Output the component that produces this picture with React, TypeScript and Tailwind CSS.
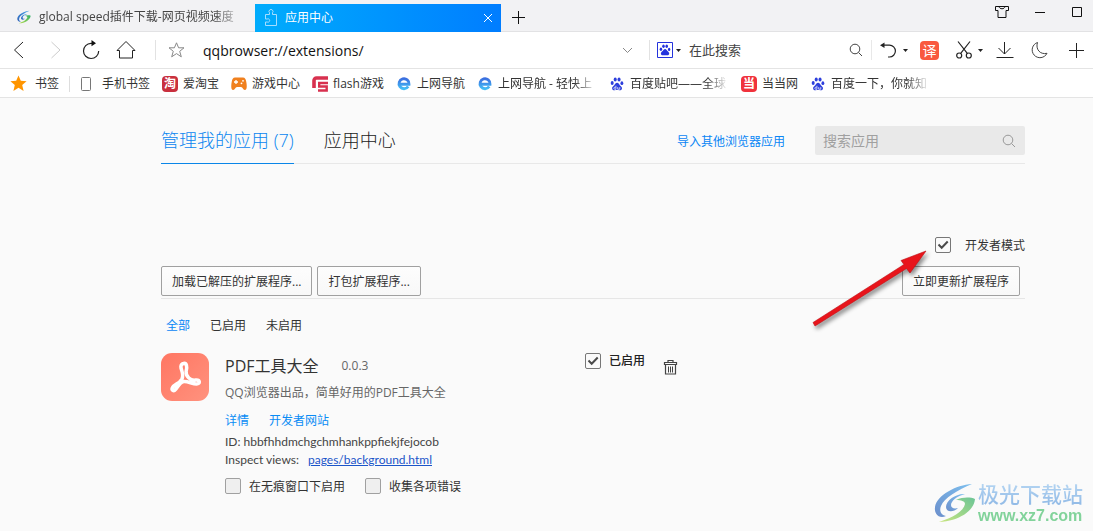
import React from "react";

type BookmarkItem = {
  label: string;
  icon: React.ReactNode;
  fade?: boolean;
};

//logo of the download site
const SwirlLogo = ({ className, id }: { className: string; id: string }) => (
  <svg className={className} viewBox="0 0 42 40" aria-hidden="true">
    <defs>
      <linearGradient id={`${id}-blue`} x1="0" y1="1" x2="1" y2="0">
        <stop offset="0" stopColor="#2f62b8" />
        <stop offset="1" stopColor="#49a7ea" />
      </linearGradient>
      <linearGradient id={`${id}-green`} x1="0" y1="1" x2="1" y2="0">
        <stop offset="0" stopColor="#b4dc4a" />
        <stop offset="1" stopColor="#2fae6c" />
      </linearGradient>
    </defs>
    <path
      fill={`url(#${id}-blue)`}
      d="M38 1C22 2 3 12 1 24c-1 7 4 12 11 9-5-1-7-5-5-10C10 15 24 7 38 1z"
    />
    <path
      fill={`url(#${id}-blue)`}
      d="M31 11c-8-1-19 6-19 13 0 5 7 6 12 1-4 1-7 0-7-3 0-4 6-9 14-11z"
    />
    <path
      fill={`url(#${id}-green)`}
      d="M22 17c7-3 14-3 19-1-1 12-16 22-36 23 13-4 25-11 26-18 0-3-4-4-9-4z"
    />
  </svg>
);

const PawShape = () => (
  <>
    <ellipse cx="2.6" cy="7.4" rx="1.7" ry="2.2" />
    <ellipse cx="6" cy="3.4" rx="1.7" ry="2.3" />
    <ellipse cx="10.3" cy="3.4" rx="1.7" ry="2.3" />
    <ellipse cx="13.5" cy="7.6" rx="1.6" ry="2.1" />
    <path d="M8.1 7.2c-1.6 0-2.1 1.5-3.2 2.6C3.6 11 2.5 11.6 2.5 13.2c0 1.7 1.3 2.5 2.900 2.300 1.800-.300 3.400-.300 5.200 0 1.700.200 3-.600 3-2.300 0-1.600-1.200-2.200-2.400-3.400-1-1.100-1.500-2.600-3.100-2.600z" />
  </>
);

const BaiduIcon = () => (
  <svg className="h-4 w-4" viewBox="-1 0 18 17" fill="#2d3fdc" aria-hidden="true">
    <PawShape />
    <path d="M6.800 10.500v4H5.600c-1.500 0-1.500-2.400 0-2.400h1M8.800 12v2.400h2.300V12" fill="none" stroke="#fff" strokeWidth=".8" />
  </svg>
);

const BrowserIcon = () => (
  <svg className="h-4 w-4" viewBox="0 0 16 16" fill="none" aria-hidden="true">
    <defs>
      <linearGradient id="nav-e" x1="0" y1="0" x2="0" y2="1">
        <stop offset="0" stopColor="#3b6fe0" />
        <stop offset="1" stopColor="#43bdf5" />
      </linearGradient>
    </defs>
    <path
      d="M12.200 10.500A5 5 0 1 1 13 8.200H4"
      stroke="url(#nav-e)"
      strokeWidth="2.900"
    />
  </svg>
);

const GamepadIcon = () => (
  <svg className="h-4 w-4" viewBox="0 0 16 16" aria-hidden="true">
    <path
      d="M4 1.500h8c2 0 2.800 1.600 3.300 4.500.600 3.300 1 8-1.500 8-1.800 0-2-3-3.800-3H6c-1.800 0-2 3-3.800 3C-.300 14 .100 9.300.700 6 1.200 3.100 2 1.500 4 1.500z"
      fill="#f0801e"
    />
    <path d="M3 6h4M5 4v4" stroke="#fff" strokeWidth="1.300" />
    <circle cx="12" cy="4.800" r=".9" fill="#fff" />
    <circle cx="10.500" cy="7.300" r=".9" fill="#fff" />
  </svg>
);

const FlashIcon = () => (
  <svg className="h-4 w-4" viewBox="0 0 16 16" fill="none" stroke="#d8314f" aria-hidden="true">
    <path d="M16 2H4.500A2.500 2.500 0 0 0 2 4.500V12" strokeWidth="3.600" />
    <path d="M16 7H7.200V10.500H14.700V14.500H6" strokeWidth="2.400" />
  </svg>
);

const bookmarks: BookmarkItem[] = [
  {
    label: "爱淘宝",
    icon: (
      <span className="grid h-4 w-4 place-items-center rounded-sm bg-[#c9303e] text-[12px] leading-4 font-bold text-white">
        淘
      </span>
    ),
  },
  { label: "游戏中心", icon: <GamepadIcon /> },
  { label: "flash游戏", icon: <FlashIcon /> },
  { label: "上网导航", icon: <BrowserIcon /> },
  { label: "上网导航 - 轻快上", icon: <BrowserIcon />, fade: true },
  { label: "百度贴吧——全球", icon: <BaiduIcon />, fade: true },
  {
    label: "当当网",
    icon: (
      <span className="grid h-4 w-4 place-items-center rounded-sm bg-[#f0323c] text-[12px] leading-4 font-bold text-white">
        当
      </span>
    ),
  },
  { label: "百度一下，你就知", icon: <BaiduIcon />, fade: true },
];

const Caret = () => (
  <svg className="h-[3px] w-[5px]" viewBox="0 0 5 3" aria-hidden="true">
    <path d="M0 0h5L2.500 3z" fill="#222" />
  </svg>
);

const SearchIcon = ({ className }: { className: string }) => (
  <svg className={className} viewBox="0 0 14 14" fill="none" stroke="currentColor" aria-hidden="true">
    <circle cx="6" cy="6" r="4.800" />
    <path d="M9.500 9.500l3.500 3.500" />
  </svg>
);

const CheckBox = ({ id, checked }: { id: string; checked?: boolean }) => (
  <span className="grid h-4 w-4 shrink-0">
    <input
      id={id}
      type="checkbox"
      defaultChecked={checked}
      className="peer col-start-1 row-start-1 h-4 w-4 appearance-none rounded-xs border border-[#a0a0a0] bg-[#efefef] checked:border-[#777] checked:bg-[#fafafa]"
    />
    <svg
      className="pointer-events-none col-start-1 row-start-1 hidden h-4 w-4 peer-checked:block"
      viewBox="0 0 16 16"
      fill="none"
      stroke="#4a4a4a"
      strokeWidth="2"
    >
      <path d="M3.500 7.500l3.200 3.200 6-6.200" />
    </svg>
  </span>
);

//tabs and window buttons
const TabBar = () => (
  <div className="flex h-8 items-end border-b border-[#e2e2e4] bg-[#f2f2f4] text-[12px]">
    <div className="flex h-7 w-[255px] shrink-0 items-center gap-2 pr-[10px] pl-[17px] text-[#444]">
      <SwirlLogo className="h-[14px] w-[14px] shrink-0" id="tab" />
      <span className="leading-5 whitespace-nowrap [mask-image:linear-gradient(to_right,black_175px,transparent_205px)]">
        global speed插件下载-网页视频速度
      </span>
    </div>
    <div className="-mb-px flex h-7 w-[246px] shrink-0 items-center bg-linear-to-r from-[#00acfc] to-[#007dff] pr-[7px] pl-[9px] text-white">
      <svg className="h-[18px] w-[14px]" viewBox="0 0 14 18" fill="none" stroke="#a5ddff" aria-hidden="true">
        <path d="M2 5.500h3.500V3.800a2 2 0 1 1 3 0v1.700H12.500v11H1.500v-3.500h1.700a1.700 1.700 0 1 0 0-3H1.500V5.500z" />
      </svg>
      <span className="ml-[7px] flex-1 leading-5">应用中心</span>
      <button aria-label="关闭标签页">
        <svg className="h-3 w-3" viewBox="0 0 12 12" stroke="#fff">
          <path d="M2 2l8 8M10 2l-8 8" />
        </svg>
      </button>
    </div>
    <button aria-label="新标签页" className="mb-[7px] ml-[10px]">
      <svg className="h-[14px] w-[14px]" viewBox="0 0 14 14" stroke="#111">
        <path d="M7.500 1v13M1 7.500h13" />
      </svg>
    </button>
    <div className="ml-auto flex items-center gap-[25px] self-start pt-[5px] pr-[10px]">
      <button aria-label="皮肤">
        <svg className="h-[14px] w-[14px]" viewBox="0 0 14 14" fill="none" stroke="#111">
          <path d="M.500 1.500h3.500c.500 3 5.500 3 6 0h3.500v4h-2.500v7H3v-7H.500z" />
          <path d="M4 1.500h6" />
        </svg>
      </button>
      <button aria-label="最小化">
        <svg className="h-3 w-3" viewBox="0 0 12 12" stroke="#111">
          <path d="M1 6.500h10" />
        </svg>
      </button>
      <button aria-label="最大化">
        <svg className="h-3 w-3" viewBox="0 0 12 12" fill="none" stroke="#111">
          <path d="M1.500 1.500h9v9h-9z" />
        </svg>
      </button>
    </div>
  </div>
);

const Toolbar = () => (
  <div className="flex h-[37px] items-center border-b border-[#e4e4e4] bg-white pr-[9px] pl-[13px] text-[#222]">
    <button aria-label="后退">
      <svg className="h-5 w-3" viewBox="0 0 12 20" fill="none" stroke="#222">
        <path d="M10 2L1.500 10l8.500 8" />
      </svg>
    </button>
    <button aria-label="前进" className="ml-[25px]">
      <svg className="h-5 w-3" viewBox="0 0 12 20" fill="none" stroke="#ccc">
        <path d="M1.500 2l8.500 8-8.500 8" />
      </svg>
    </button>
    <button aria-label="刷新" className="ml-5">
      <svg className="h-5 w-[18px]" viewBox="0 0 18 20" fill="none" stroke="#222" strokeWidth="1.200">
        <path d="M11.500 3.300H9A7.600 7.600 0 1 0 16.700 11" />
        <path d="M9.500 0l4.500 3.300-4.500 3z" fill="#111" stroke="none" />
      </svg>
    </button>
    <button aria-label="主页" className="ml-4">
      <svg className="h-5 w-5" viewBox="0 0 20 20" fill="none" stroke="#222">
        <path d="M1 10.500L10 1.500l9 9H16.500v7.500h-13v-7.500z" />
      </svg>
    </button>
    <span className="ml-[19px] h-5 w-px bg-[#e2e2e2]" />
    <button aria-label="收藏" className="ml-3">
      <svg className="h-[18px] w-[17px]" viewBox="0 0 17 18" fill="none" stroke="#888">
        <path d="M8.500 1.800l2.100 5h5.400l-4.300 3.500 1.600 5.500-4.800-3.200-4.800 3.200 1.600-5.500L1 6.800h5.400z" />
      </svg>
    </button>
    <input
      aria-label="地址"
      defaultValue="qqbrowser://extensions/"
      className="ml-[18px] h-7 min-w-0 flex-1 text-[14px] text-[#111] outline-none"
    />
    <button aria-label="历史地址">
      <svg className="h-[7px] w-[11px]" viewBox="0 0 11 7" fill="none" stroke="#888">
        <path d="M1 1l4.500 4.500L10 1" />
      </svg>
    </button>
    <span className="ml-4 h-5 w-px bg-[#e2e2e2]" />
    <button aria-label="搜索引擎" className="ml-[7px] flex items-center gap-[3px]">
      <svg className="h-4 w-4" viewBox="0 0 16 16" fill="#2433dd">
        <path d="M.500.500h15v15H.500z" fill="#fff" stroke="#2433dd" />
        <g transform="translate(2 1.700) scale(.75)">
          <PawShape />
        </g>
      </svg>
      <Caret />
    </button>
    <input
      aria-label="搜索"
      placeholder="在此搜索"
      className="ml-2 h-7 w-[160px] text-[13px] outline-none placeholder:text-[#444]"
    />
    <button aria-label="开始搜索">
      <SearchIcon className="h-[14px] w-[14px] text-[#444]" />
    </button>
    <span className="ml-2 h-5 w-px bg-[#e8e8e8]" />
    <div className="ml-2 flex items-center">
      <button aria-label="撤销" className="flex items-center gap-[6px]">
        <svg className="h-[18px] w-[17px]" viewBox="0 0 17 18" fill="none" stroke="#222" strokeWidth="1.200">
          <path d="M3 4.200h6.500a5.900 5.900 0 1 1 0 11.800H8" />
          <path d="M0 4.200l4.500-2.700v5.400z" fill="#222" stroke="none" />
        </svg>
        <Caret />
      </button>
      <button className="ml-3 grid h-[19px] w-[19px] place-items-center rounded-sm bg-[#f9593f] text-[14px] leading-[19px] text-white">
        译
      </button>
      <button aria-label="截图" className="ml-[17px] flex items-center gap-[6px]">
        <svg className="h-[18px] w-4" viewBox="0 0 16 18" fill="none" stroke="#222" strokeWidth="1.200">
          <path d="M2 .500l9.300 11.800M14 .500L4.700 12.300" />
          <circle cx="3.200" cy="14.500" r="2.500" />
          <circle cx="12.800" cy="14.500" r="2.500" />
        </svg>
        <Caret />
      </button>
      <button aria-label="下载" className="ml-[13px]">
        <svg className="h-[18px] w-[18px]" viewBox="0 0 18 18" fill="none" stroke="#222">
          <path d="M8.500 1v12M2.500 7L8.500 13 14.500 7M.500 16.500h17" />
        </svg>
      </button>
      <button aria-label="夜间模式" className="ml-[17px]">
        <svg className="h-[18px] w-[17px]" viewBox="0 0 17 18" fill="none" stroke="#444">
          <path d="M6.500 1.500A7.800 7.800 0 1 0 16 12.300C9 14 4.300 8 6.500 1.500z" />
        </svg>
      </button>
      <button aria-label="更多" className="ml-5">
        <svg className="h-4 w-4" viewBox="0 0 16 16" stroke="#222">
          <path d="M8.500 1v15M1 8.500h15" />
        </svg>
      </button>
    </div>
  </div>
);

const BookmarkBar = () => (
  <div className="flex h-[29px] items-center overflow-hidden border-b border-[#e4e4e4] bg-white pt-px pl-[10px] text-[12px] leading-5 whitespace-nowrap text-[#333]">
    <a href="#bookmarks" className="flex items-center gap-2">
      <svg className="h-[17px] w-[17px]" viewBox="0 0 17 17" fill="#ff9500" aria-hidden="true">
        <path d="M8.500.500l2.300 5.300 5.800.500-4.400 3.800 1.400 5.800-5.100-3.100-5.100 3.100 1.400-5.800L.400 6.300l5.800-.500z" />
      </svg>
      书签
    </a>
    <span className="ml-[10px] h-4 w-px bg-[#ddd]" />
    <a href="#mobile" className="ml-[10px] flex items-center gap-[10px]">
      <svg className="h-4 w-3" viewBox="0 0 12 16" fill="none" stroke="#777" aria-hidden="true">
        <rect x="1.500" y="1.500" width="9" height="13" rx="1" />
      </svg>
      手机书签
    </a>
    <div className="ml-3 flex items-center gap-3">
      {bookmarks.map((item, index) => (
        <a href="#site" key={index} className="flex shrink-0 items-center gap-[5px]">
          {item.icon}
          {item.fade ? (
            <span className="w-[99px] [mask-image:linear-gradient(to_right,black_76px,transparent_99px)]">
              {item.label}
            </span>
          ) : (
            <span>{item.label}</span>
          )}
        </a>
      ))}
    </div>
  </div>
);

//one installed extension
const ExtensionCard = () => (
  <article className="mt-[17px] flex items-start">
    <svg className="h-12 w-12 shrink-0" viewBox="0 0 48 48" aria-hidden="true">
      <defs>
        <linearGradient id="pdf-bg" x1="0" y1="0" x2="1" y2="1">
          <stop offset="0" stopColor="#ff7662" />
          <stop offset="1" stopColor="#ff927e" />
        </linearGradient>
      </defs>
      <rect width="48" height="48" rx="11" fill="url(#pdf-bg)" />
      <path
        d="M22.500 10.500c3-.800 4 3 2.600 8-.4 5 4.500 9.500 9.500 8.500 4.500-.500 5 4 1 4-4.500 0-8.500-3-13-2.500-4 1-6 5.500-8 8-2 2.500-4.500.500-3-2 2-3.500 6.500-3.500 9.300-8.500 2.500-5-1.200-9-1-12.500.2-1.600 1-2.700 2.600-3z"
        fill="none"
        stroke="#fff"
        strokeWidth="3.500"
        strokeLinejoin="round"
      />
    </svg>
    <div className="ml-4 w-[360px] text-[12px] text-[#444]">
      <div className="flex items-center gap-[23px] leading-[26px]">
        <h2 className="text-[16px] text-[#333]">PDF工具大全</h2>
        <span className="text-[#666]">0.0.3</span>
      </div>
      <p className="mt-1 leading-5 text-[#666]">QQ浏览器出品，简单好用的PDF工具大全</p>
      <div className="mt-2 flex gap-5 leading-5 text-[#0a8cf5]">
        <a href="#detail">详情</a>
        <a href="#developer">开发者网站</a>
      </div>
      <div className="mt-[2px] font-['Lato',sans-serif] leading-[18px]">
        <p>ID: hbbfhhdmchgchmhankppfiekjfejocob</p>
        <p className="flex gap-[9px]">
          Inspect views:
          <a href="#background" className="text-[#1b55c9] underline">
            pages/background.html
          </a>
        </p>
      </div>
      <div className="mt-[9px] flex items-center gap-5 leading-[18px] text-[#333]">
        <div className="flex gap-2">
          <CheckBox id="incognito" />
          <label htmlFor="incognito">在无痕窗口下启用</label>
        </div>
        <div className="flex gap-2">
          <CheckBox id="errors" />
          <label htmlFor="errors">收集各项错误</label>
        </div>
      </div>
    </div>
    <div className="flex items-start text-[12px] leading-4">
      <CheckBox id="enabled" checked />
      <label htmlFor="enabled" className="ml-2 font-medium text-[#222]">
        已启用
      </label>
      <button aria-label="删除" className="mt-[6px] ml-[18px]">
        <svg className="h-4 w-[15px]" viewBox="0 0 15 16" fill="none" stroke="#444" strokeWidth="1.200">
          <path d="M5 3V1.500h5V3M1.500 5.500V3.500h12v2zM2.500 5.500v9.500h10V5.500" />
          <path d="M5.500 7.500v6M7.500 7.500v6M9.500 7.500v6" strokeWidth="1" />
        </svg>
      </button>
    </div>
  </article>
);

const outlineButton =
  "h-[30px] rounded-xs border border-[#a0a0a0] bg-linear-to-b from-[#fdfdfd] to-[#f8f8f8] px-[10px] pt-[2px] text-[12px] leading-5 text-[#333]";

const ExtensionsPage = () => (
  <main className="relative pr-[68px] pb-8 pl-[161px]">
    <header className="flex items-start border-b border-[#e8e8e8] pt-7">
      <nav className="-mb-px flex flex-1 gap-[30px] pt-[2px] text-[18px] leading-6 font-light whitespace-nowrap">
        <a href="#mine" className="border-b border-[#0a86e8] pb-[11px] text-[#0a86f0]">
          管理我的应用 (7)
        </a>
        <a href="#center" className="text-[#222]">
          应用中心
        </a>
      </nav>
      <a href="#import" className="mr-[30px] pt-px text-[12px] leading-[30px] text-[#0a86f5]">
        导入其他浏览器应用
      </a>
      <div className="flex h-[29px] w-[210px] items-center rounded-xs bg-[#e9e9e9] pr-[9px] pl-2">
        <input
          aria-label="搜索应用"
          placeholder="搜索应用"
          className="min-w-0 flex-1 bg-transparent text-[14px] outline-none placeholder:text-[#a0a0a0]"
        />
        <SearchIcon className="h-[14px] w-[14px] text-[#999]" />
      </div>
    </header>

    <div className="mt-[73px] flex h-4 justify-end gap-[14px] text-[12px] leading-[18px] text-[#333]">
      <CheckBox id="dev-mode" checked />
      <label htmlFor="dev-mode">开发者模式</label>
    </div>

    <div className="mt-[13px] flex gap-[5px] border-b border-[#e6e6e6] pr-[5px] pb-[2px]">
      <button className={outlineButton}>加载已解压的扩展程序...</button>
      <button className={outlineButton}>打包扩展程序...</button>
      <button className={`${outlineButton} ml-auto`}>立即更新扩展程序</button>
    </div>

    <div className="mt-[17px] flex gap-5 pl-[5px] text-[12px] leading-5 text-[#333]">
      <button className="text-[#0a86f5]">全部</button>
      <button>已启用</button>
      <button>未启用</button>
    </div>

    <ExtensionCard />

    {/* arrow to the developer mode check box */}
    <svg
      className="pointer-events-none absolute top-[142px] right-[158px] h-[94px] w-[130px]"
      viewBox="0 0 130 94"
      aria-hidden="true"
    >
      <g className="drop-shadow-[2px_3px_2px_rgba(0,0,0,0.45)]">
        <path d="M8 82.500L99 24.500l-3-4L121 11 105 33l-3.500-4.500L10 86z" fill="#e8141b" stroke="#c00d12" strokeWidth=".6" />
      </g>
    </svg>
  </main>
);

//site mark in the corner
const Watermark = () => (
  <div className="pointer-events-none fixed right-[10px] bottom-[6px] flex items-center gap-[2px] opacity-70">
    <SwirlLogo className="h-10 w-[42px]" id="mark" />
    <div className="whitespace-nowrap">
      <div className="bg-linear-to-b from-[#9cc9f0] to-[#5f9bdc] bg-clip-text text-[21px] leading-[26px] font-medium text-transparent">
        极光下载站
      </div>
      <div className="font-['Liberation_Sans'] text-[16px] leading-[18px] font-bold text-[#4fc272]">
        www.xz7.com
      </div>
    </div>
  </div>
);

const App = () => {
  return (
    <div
      lang="zh-CN"
      className="min-h-screen bg-[#fafafa] font-['Open_Sans','Noto_Sans_CJK_SC',sans-serif]"
    >
      <TabBar />
      <Toolbar />
      <BookmarkBar />
      <ExtensionsPage />
      <Watermark />
    </div>
  );
};

export default App;
